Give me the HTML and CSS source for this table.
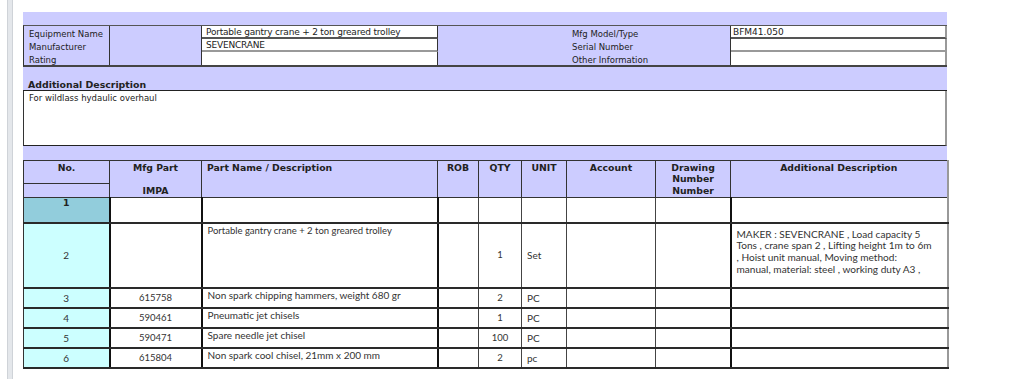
FILE: index.html
```html
<!DOCTYPE html>
<html>
<head>
<meta charset="utf-8">
<link rel="stylesheet" href="styles.css">
</head>
<body>
<div class="page">
  <div class="rail"></div>
  <main class="sheet">
    <div class="band-top"></div>
    <div class="info">
      <div class="lbl">Equipment Name<br>Manufacturer<br>Rating</div>
      <div class="blank"></div>
      <div class="val r1">Portable gantry crane + 2 ton greared trolley</div>
      <div class="val r2">SEVENCRANE</div>
      <div class="val r3"></div>
      <div class="lbl2">Mfg Model/Type<br>Serial Number<br>Other Information</div>
      <div class="val2 r1">BFM41.050</div>
      <div class="val2 r2"></div>
      <div class="val2 r3"></div>
    </div>
    <div class="ad-head">Additional Description</div>
    <div class="ad-box">For wildlass hydaulic overhaul</div>
    <div class="band-gap"></div>
    <table class="items">
      <colgroup>
        <col class="w-no"><col class="w-mfg"><col class="w-name"><col class="w-rob"><col class="w-qty"><col class="w-unit"><col class="w-acc"><col class="w-drw"><col class="w-add">
      </colgroup>
      <thead>
        <tr class="h1">
          <th class="no-h">No.</th>
          <th rowspan="2">Mfg Part<br><br>IMPA</th>
          <th rowspan="2" class="left">Part Name / Description</th>
          <th rowspan="2">ROB</th>
          <th rowspan="2">QTY</th>
          <th rowspan="2">UNIT</th>
          <th rowspan="2">Account</th>
          <th rowspan="2">Drawing<br>Number<br>Number</th>
          <th rowspan="2" class="last">Additional Description</th>
        </tr>
        <tr class="h2"><th class="no-h"></th></tr>
      </thead>
      <tbody>
        <tr class="row-first">
          <td class="no first">1</td><td class="thick"></td><td class="thick"></td><td></td><td></td><td></td><td></td><td class="thick"></td><td class="last"></td>
        </tr>
        <tr class="row-tall">
          <td class="no mid">2</td><td class="thick"></td><td class="thick name small">Portable gantry crane + 2 ton greared trolley</td><td></td><td class="num mid">1</td><td class="unit mid">Set</td><td></td><td class="thick"></td><td class="last desc"><span>MAKER : SEVENCRANE , Load capacity 5</span><br><span>Tons , crane span 2 , Lifting height 1m to 6m</span><br><span>, Hoist unit manual, Moving method:</span><br><span>manual, material: steel , working duty A3 ,</span></td>
        </tr>
        <tr class="row">
          <td class="no mid">3</td><td class="thick num mid">615758</td><td class="thick name">Non spark chipping hammers, weight 680 gr</td><td></td><td class="num mid">2</td><td class="unit mid">PC</td><td></td><td class="thick"></td><td class="last"></td>
        </tr>
        <tr class="row">
          <td class="no mid">4</td><td class="thick num mid">590461</td><td class="thick name">Pneumatic jet chisels</td><td></td><td class="num mid">1</td><td class="unit mid">PC</td><td></td><td class="thick"></td><td class="last"></td>
        </tr>
        <tr class="row">
          <td class="no mid">5</td><td class="thick num mid">590471</td><td class="thick name">Spare needle jet chisel</td><td></td><td class="num mid">100</td><td class="unit mid">PC</td><td></td><td class="thick"></td><td class="last"></td>
        </tr>
        <tr class="row">
          <td class="no mid">6</td><td class="thick num mid">615804</td><td class="thick name">Non spark cool chisel, 21mm x 200 mm</td><td></td><td class="num mid">2</td><td class="unit mid">pc</td><td></td><td class="thick"></td><td class="last"></td>
        </tr>
      </tbody>
    </table>
  </main>
</div>
</body>
</html>
```

FILE: styles.css
```css
* { box-sizing: border-box; }
html, body { margin: 0; padding: 0; background: #ffffff; }
body {
  font-family: "DejaVu Sans", Verdana, sans-serif;
  font-size: 8.5px;
  color: #222;
}
.page {
  display: flex;
  align-items: flex-start;
  height: 379px;
  overflow: hidden;
}
.rail {
  align-self: stretch;
  width: 6px;
  margin-left: 7px;
  background: #e4e7eb;
  border-left: 1px solid #cfd3d8;
  border-right: 1px solid #cfd3d8;
}
.sheet {
  margin-left: 10px;
  margin-top: 12px;
  width: 924px;
  background: #ccccff;
}
.band-top { height: 13px; }

/* info block */
.info {
  display: grid;
  grid-template-columns: 86px 92px 236px 293px 216px;
  grid-template-rows: 13px 13px 13px;
  border-top: 1px solid #555;
  border-bottom: 2px solid #444;
  border-left: 1px solid #333;
}
.lbl {
  grid-column: 1; grid-row: 1 / 4;
  border-right: 1px solid #333;
  padding-left: 5px;
  padding-top: 2px;
  line-height: 13px;
  white-space: nowrap;
}
.blank {
  grid-column: 2; grid-row: 1 / 4;
  border-right: 1px solid #333;
}
.lbl2 {
  grid-column: 4; grid-row: 1 / 4;
  border-right: 1px solid #333;
  padding-left: 134px;
  padding-top: 2px;
  line-height: 13px;
  white-space: nowrap;
}
.val, .val2 {
  background: #fff;
  font-size: 9px;
  line-height: 12px;
  white-space: nowrap;
}
.val { grid-column: 3; padding-left: 4px; border-right: 1px solid #333; letter-spacing: -0.2px; }
.val2 { grid-column: 5; padding-left: 2px; border-right: 2px solid #999; }
.r1 { grid-row: 1; border-bottom: 2px solid #555; }
.r2 { grid-row: 2; border-bottom: 2px solid #999; }
.r3 { grid-row: 3; }

/* additional description */
.ad-head {
  height: 24px;
  border-bottom: 1px solid #222;
  display: flex;
  align-items: flex-end;
  padding-left: 5px;
  font-weight: bold;
  font-size: 9.4px;
  line-height: 11px;
}
.ad-box {
  height: 55px;
  background: #fff;
  border-left: 1px solid #333;
  border-right: 2px solid #999;
  border-bottom: 1px solid #222;
  padding-left: 5px;
  padding-top: 1px;
  line-height: 13px;
}
.band-gap { height: 14px; }

/* items table */
.items {
  width: 924px;
  border-collapse: collapse;
  table-layout: fixed;
}
.w-no { width: 86px; }
.w-mfg { width: 92px; }
.w-name { width: 236px; }
.w-rob { width: 41px; }
.w-qty { width: 43px; }
.w-unit { width: 45px; }
.w-acc { width: 89px; }
.w-drw { width: 75px; }
.w-add { width: 217px; }

.items th {
  background: #ccccff;
  border: 1px solid #333;
  vertical-align: top;
  text-align: center;
  font-size: 9.3px;
  font-weight: bold;
  line-height: 11.3px;
  padding: 1px 2px 0;
  white-space: nowrap;
}
.items th.left { text-align: left; padding-left: 5px; }
.items th.last { border-right: 2px solid #999; }
.items .h1 th { height: 23px; }
.items .h2 th { height: 14px; }

.items td {
  background: #fff;
  border-left: 1px solid #444;
  border-right: 1px solid #444;
  border-bottom: 2px solid #2a2a2a;
  padding: 0;
  font-family: "Lato", "Open Sans", sans-serif;
  font-size: 10px;
  line-height: 12px;
  vertical-align: top;
  white-space: nowrap;
  color: #333;
}
.items td.thick { border-right: 2px solid #111; }
.items td.no { border-right: 2px solid #111; border-left: 1px solid #333; background: #ccffff; text-align: center; }
.items td.no.first {
  background: #92cddc;
  font-family: "DejaVu Sans", Verdana, sans-serif;
  font-weight: bold;
  font-size: 9.3px;
  line-height: 10px;
  color: #222;
}
.items td.last { border-right: 2px solid #999; }
.items td.mid { vertical-align: middle; }
.items td.num { text-align: center; font-size: 9.5px; }
.items td.no.mid { font-size: 10px; }
.items td.unit { padding-left: 5px; }
.items td.name { padding-left: 5px; font-size: 10px; }
.items td.name.small { font-size: 9.5px; padding-top: 1px; }
.items td.desc {
  padding: 5px 0 0 5px;
  font-size: 10.1px;
  line-height: 11.7px;
}
.items .row-first td { height: 25px; }
.items .row-tall td { height: 65px; }
.items .row td { height: 20px; }
```
